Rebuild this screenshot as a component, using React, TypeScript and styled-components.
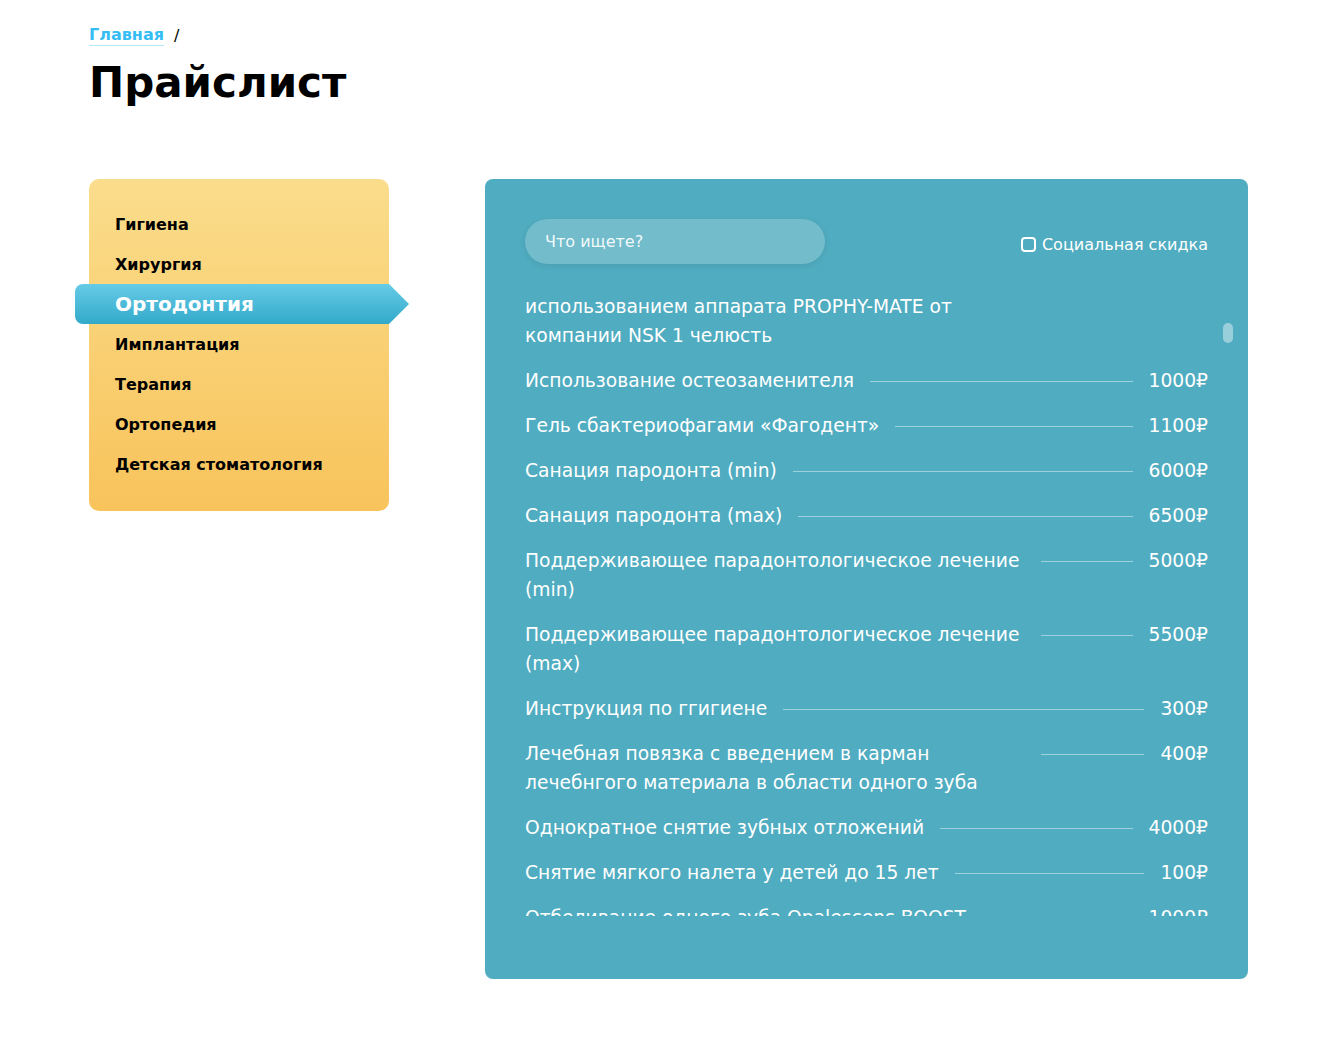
import React, { useLayoutEffect, useRef } from 'react';
import styled, { createGlobalStyle } from 'styled-components';

interface PriceItem {
  name: string;
  price: number;
}

const categories = [
  'Гигиена',
  'Хирургия',
  'Ортодонтия',
  'Имплантация',
  'Терапия',
  'Ортопедия',
  'Детская стоматология',
];

const prices: PriceItem[] = [
  { name: 'Профессиональная гигиена полости рта с использованием аппарата PROPHY-MATE от компании NSK 1 челюсть', price: 2500 },
  { name: 'Использование остеозаменителя', price: 1000 },
  { name: 'Гель сбактериофагами «Фагодент»', price: 1100 },
  { name: 'Санация пародонта (min)', price: 6000 },
  { name: 'Санация пародонта (max)', price: 6500 },
  { name: 'Поддерживающее парадонтологическое лечение (min)', price: 5000 },
  { name: 'Поддерживающее парадонтологическое лечение (max)', price: 5500 },
  { name: 'Инструкция по ггигиене', price: 300 },
  { name: 'Лечебная повязка с введением в карман лечебнгого материала в области одного зуба', price: 400 },
  { name: 'Однократное снятие зубных отложений', price: 4000 },
  { name: 'Снятие мягкого налета у детей до 15 лет', price: 100 },
  { name: 'Отбеливание одного зуба Opalescens BOOST', price: 1000 },
  { name: 'Фторирование зубов (1 челюсть)', price: 1500 },
  { name: 'Герметизация фиссур одного зуба', price: 1200 },
];

const App: React.FC = () => {
  const listRef = useRef<HTMLDivElement>(null);

  // list is shown scrolled so that only the last two lines of the first item remain
  useLayoutEffect(() => {
    const list = listRef.current;
    if (!list || !list.firstElementChild) return;
    const first = list.firstElementChild as HTMLElement;
    list.scrollTop = first.offsetHeight - 58;
  }, []);

  return (
    <>
      <GlobalStyle />
      <Page>
        <Breadcrumbs>
          <Crumb href="#">Главная</Crumb>
          <Slash>/</Slash>
        </Breadcrumbs>
        <Title>Прайслист</Title>
        <Content>
          <Sidebar>
            {categories.map((c) => (
              <Category key={c} $active={c === 'Ортодонтия'}>
                {c}
              </Category>
            ))}
          </Sidebar>
          <Panel>
            <Toolbar>
              <Search placeholder="Что ищете?" />
              <Discount>
                <Box type="checkbox" />
                Социальная скидка
              </Discount>
            </Toolbar>
            <ListWrap>
              <List ref={listRef}>
                {prices.map((p) => (
                  <Row key={p.name}>
                    <Name>{p.name}</Name>
                    <Leader />
                    <Price>{p.price}₽</Price>
                  </Row>
                ))}
              </List>
              <Thumb />
            </ListWrap>
          </Panel>
        </Content>
      </Page>
    </>
  );
};

const GlobalStyle = createGlobalStyle`
  * { box-sizing: border-box; }
  body {
    margin: 0;
    background: #fff;
    font-family: "DejaVu Sans", Verdana, sans-serif;
    color: #000;
  }
`;

const Page = styled.div`
  width: 1159px;
  margin: 0 0 0 89px;
  padding-top: 24px;
`;

const Breadcrumbs = styled.div`
  display: flex;
  align-items: center;
  gap: 10px;
  height: 22px;
  font-size: 16px;
`;

const Crumb = styled.a`
  color: #36bdf3;
  font-weight: 700;
  text-decoration: none;
  border-bottom: 1px solid #b6e6fb;
  line-height: 20px;
`;

const Slash = styled.span`
  color: #000;
`;

const Title = styled.h1`
  margin: 9px 0 0;
  font-size: 42px;
  line-height: 56px;
  font-weight: 700;
`;

const Content = styled.div`
  display: flex;
  align-items: flex-start;
  justify-content: space-between;
  margin-top: 68px;
`;

const Sidebar = styled.nav`
  width: 300px;
  padding: 25px 0 27px;
  border-radius: 10px;
  background: linear-gradient(180deg, #fadd8c 0%, #f8c35b 100%);
  display: flex;
  flex-direction: column;
`;

const Category = styled.div<{ $active?: boolean }>`
  height: 40px;
  display: flex;
  align-items: center;
  padding-left: ${(p) => (p.$active ? '40px' : '26px')};
  margin: ${(p) => (p.$active ? '0 -20px 0 -14px' : '0')};
  font-weight: 700;
  font-size: ${(p) => (p.$active ? '20px' : '16px')};
  color: ${(p) => (p.$active ? '#fff' : '#000')};
  background: ${(p) => (p.$active ? 'linear-gradient(180deg, #66cbe7 0%, #33a9ca 100%)' : 'none')};
  border-radius: ${(p) => (p.$active ? '8px 0 0 8px' : '0')};
  clip-path: ${(p) =>
    p.$active
      ? 'polygon(0 0, calc(100% - 20px) 0, 100% 50%, calc(100% - 20px) 100%, 0 100%)'
      : 'none'};
  cursor: pointer;
`;

const Panel = styled.section`
  width: 763px;
  height: 800px;
  background: #50acc0;
  border-radius: 8px;
  padding: 40px 40px 0;
  color: #fff;
`;

const Toolbar = styled.div`
  display: flex;
  justify-content: space-between;
  align-items: center;
`;

const Search = styled.input`
  width: 300px;
  height: 45px;
  border: none;
  outline: none;
  border-radius: 23px;
  padding: 0 20px;
  background: rgba(255, 255, 255, 0.2);
  box-shadow: 0 2px 6px rgba(0, 0, 0, 0.08);
  color: #fff;
  font-family: inherit;
  font-size: 16px;

  &::placeholder {
    color: rgba(255, 255, 255, 0.92);
  }
`;

const Discount = styled.label`
  display: flex;
  align-items: center;
  gap: 6px;
  margin-top: 6px;
  font-size: 16px;
  color: #fff;
`;

const Box = styled.input`
  appearance: none;
  margin: 0;
  width: 15px;
  height: 15px;
  border: 2px solid #fff;
  border-radius: 4px;
  background: transparent;
`;

const ListWrap = styled.div`
  position: relative;
  margin-top: 28px;
`;

const List = styled.div`
  height: 624px;
  overflow: hidden;
  display: flex;
  flex-direction: column;
  gap: 16px;
`;

const Thumb = styled.div`
  position: absolute;
  right: -25px;
  top: 31px;
  width: 10px;
  height: 20px;
  border-radius: 5px;
  background: rgba(255, 255, 255, 0.42);
`;

const Row = styled.div`
  display: flex;
  align-items: flex-start;
  gap: 16px;
  font-size: 18.7px;
  line-height: 29px;
  flex-shrink: 0;
`;

const Name = styled.div`
  width: 500px;
  flex-shrink: 0;
  max-width: max-content;
`;

const Leader = styled.div`
  flex: 1;
  height: 1px;
  margin-top: 15px;
  background: rgba(255, 255, 255, 0.45);
`;

const Price = styled.div`
  white-space: nowrap;
`;

export default App;
